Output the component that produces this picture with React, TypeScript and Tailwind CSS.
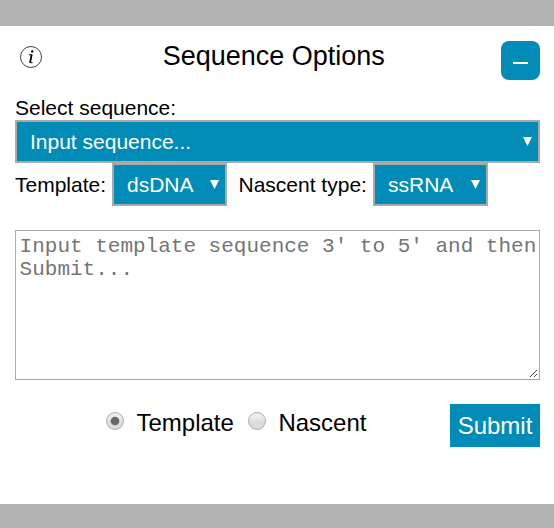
import { useState } from "react";

function Caret() {
  return (
    <svg className="h-[9px] w-[9px] shrink-0" viewBox="0 0 9 9" fill="#fff" aria-hidden="true">
      <path d="M0 0H9L4.5 9Z" />
    </svg>
  );
}

function InfoIcon() {
  return (
    <svg className="ml-[5px] mt-[5px] h-[22px] w-[22px]" viewBox="0 0 22 22" fill="none" aria-label="Info">
      <circle cx="11" cy="11" r="10.5" stroke="#222" strokeWidth="0.85" />
      <circle cx="12.2" cy="5.4" r="1.2" fill="#000" />
      <path d="M8.9 8.8H12L10.2 16.7H12.6" stroke="#000" strokeWidth="1" />
      <path d="M11.6 8.6L10 16.6" stroke="#000" strokeWidth="1.7" />
    </svg>
  );
}

function Picker({ value, className }: { value: string; className: string }) {
  return (
    <button
      type="button"
      className={`flex h-[43px] items-start justify-between border-2 border-[#a9a9a9] bg-[#008cb7] pl-[13px] text-white ${className}`}
    >
      <span className="mt-2 whitespace-nowrap leading-6">{value}</span>
      <span className="mt-[15px]">
        <Caret />
      </span>
    </button>
  );
}

function Radio({ checked, onSelect, label }: { checked: boolean; onSelect: () => void; label: string }) {
  return (
    <button
      type="button"
      role="radio"
      aria-checked={checked}
      aria-label={label}
      onClick={onSelect}
      className="mt-2 flex h-[18px] w-[18px] shrink-0 items-center justify-center rounded-full border border-[#adadad] bg-linear-to-b from-[#ededed] from-25% to-[#dcdcdc] to-55%"
    >
      {checked && (
        <svg className="h-4 w-4" viewBox="0 0 16 16" fill="#666" aria-hidden="true">
          <circle cx="8" cy="8" r="4.3" />
        </svg>
      )}
    </button>
  );
}

export default function App() {
  const [target, setTarget] = useState("Template");

  return (
    <div className="h-[528px] w-[554px] bg-[#b2b2b2] pt-[26px] font-['Liberation_Sans',Arial,sans-serif] text-[21px] text-black">
      <main className="h-[478px] bg-white pl-[15px] pr-[14px] pt-[15px]">
        <header className="flex h-[54px] items-start">
          <InfoIcon />
          <h1 className="ml-[120.7px] text-[27px] leading-[30px]">Sequence Options</h1>
          <button type="button" aria-label="Minimize" className="ml-auto flex h-[39px] w-[39px] justify-center rounded-lg bg-[#008cb7]">
            <span className="mt-[21px] h-[2px] w-[15px] bg-white" />
          </button>
        </header>

        <div className="h-[25px] pt-px leading-6">Select sequence:</div>
        <Picker value="Input sequence..." className="w-full pr-[6px]" />
        <div className="flex h-[43px]">
          <span className="mt-[10px] w-[97px] whitespace-nowrap leading-6">Template:</span>
          <Picker value="dsDNA" className="w-[115px] pr-[6px]" />
          <span className="ml-[11.5px] mt-[10px] w-[134.5px] whitespace-nowrap leading-6">Nascent type:</span>
          <Picker value="ssRNA" className="w-[115px] pr-[6px]" />
        </div>

        <div className="relative mt-[24px]">
          <textarea
            placeholder="Input template sequence 3' to 5' and then Submit..."
            className="block h-[150px] w-full resize-none overflow-hidden border border-[#a9a9a9] pl-[3.6px] pr-0 pt-1 font-['Liberation_Mono',monospace] text-[21px] leading-[23px] placeholder:text-[#757575]"
          />
          <svg
            className="pointer-events-none absolute bottom-[3px] right-[3px] h-[7px] w-[7px]"
            viewBox="0 0 7 7"
            fill="none"
            stroke="#444"
            strokeWidth="1"
            aria-hidden="true"
          >
            <path d="M0 7L7 0M4 7L7 4" />
          </svg>
        </div>

        <div className="mt-[24px] flex items-start text-2xl leading-[27px]">
          <div className="ml-[91px] flex">
            <Radio checked={target === "Template"} onSelect={() => setTarget("Template")} label="Template" />
            <span className="ml-[12.5px] mt-[5px] w-[98.5px]">Template</span>
          </div>
          <div className="ml-[13px] flex">
            <Radio checked={target === "Nascent"} onSelect={() => setTarget("Nascent")} label="Nascent" />
            <span className="ml-[12.4px] mt-[5px]">Nascent</span>
          </div>
          <button type="button" className="ml-auto h-[43px] w-[90px] bg-[#008cb7] text-white">
            Submit
          </button>
        </div>
      </main>
    </div>
  );
}
